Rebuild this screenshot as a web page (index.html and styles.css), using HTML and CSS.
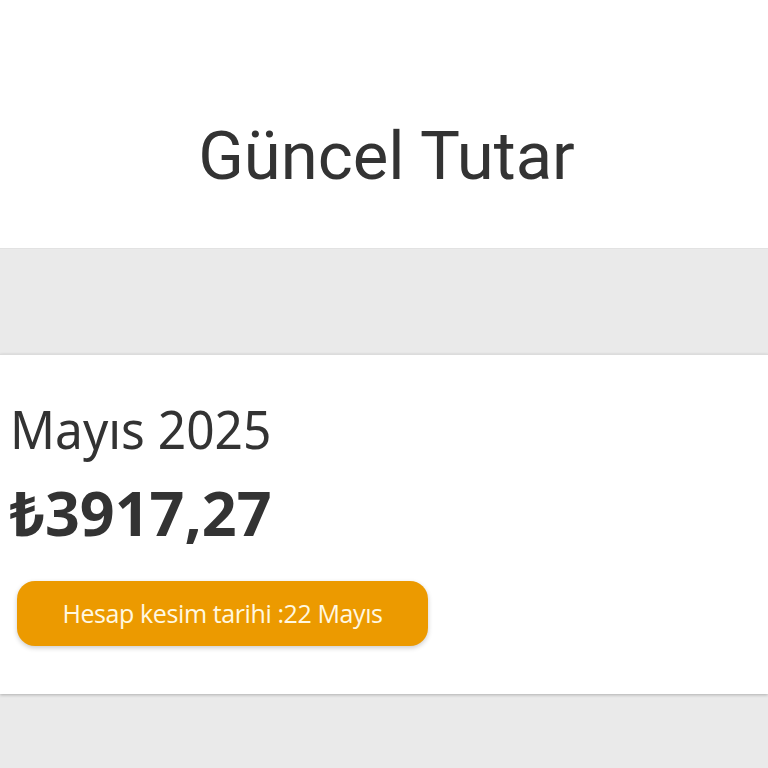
FILE: index.html
```html
<!DOCTYPE html>
<html lang="tr">
<head>
    <meta charset="UTF-8">
    <title>Güncel Tutar</title>
    <link rel="stylesheet" href="styles.css">
</head>
<body>
<div class="header">
    <div class="title">Güncel Tutar</div>
</div>
<div class="gap"></div>
<div class="card">
    <div class="month">Mayıs 2025</div>
    <div class="amount">₺3917,27</div>
    <div class="badge">Hesap kesim tarihi :22 Mayıs</div>
</div>
<div class="rest"></div>
</body>
</html>
```
FILE: styles.css
```css
html, body {
    margin: 0;
    padding: 0;
    background-color: #eaeaea;
    height: 768px;
    overflow: hidden;
}

.header {
    height: 248px;
    background-color: #ffffff;
    display: flex;
    justify-content: center;
}

.title {
    font-family: Roboto, sans-serif;
    font-size: 67px;
    color: #333333;
    margin: 123px 0 0 5px;
    line-height: 1;
}

.gap {
    height: 106px;
    border-top: 1px solid #e2e2e2;
    box-sizing: border-box;
}

.card {
    background-color: #ffffff;
    height: 340px;
    box-sizing: border-box;
    padding: 48px 0 0 10px;
    box-shadow: 0 1px 3px rgba(0, 0, 0, 0.25);
    border-top: 1px solid #dcdcdc;
}

.month {
    font-family: "Noto Sans", sans-serif;
    font-size: 52px;
    color: #333333;
    line-height: 1;
    transform: scaleX(0.955);
    transform-origin: left;
}

.amount {
    font-family: "Noto Sans", sans-serif;
    font-weight: bold;
    font-size: 61px;
    color: #333333;
    line-height: 1;
    margin-top: 27px;
}

.badge {
    display: inline-block;
    margin: 38px 0 0 7px;
    width: 411px;
    height: 65px;
    line-height: 65px;
    border-radius: 18px;
    background-color: #ec9a00;
    color: #fff8e1;
    font-family: "Open Sans", sans-serif;
    font-size: 25px;
    text-align: center;
    box-shadow: 0 2px 5px rgba(0, 0, 0, 0.2);
    letter-spacing: -0.4px;
}

.rest {
    height: 74px;
}
```
